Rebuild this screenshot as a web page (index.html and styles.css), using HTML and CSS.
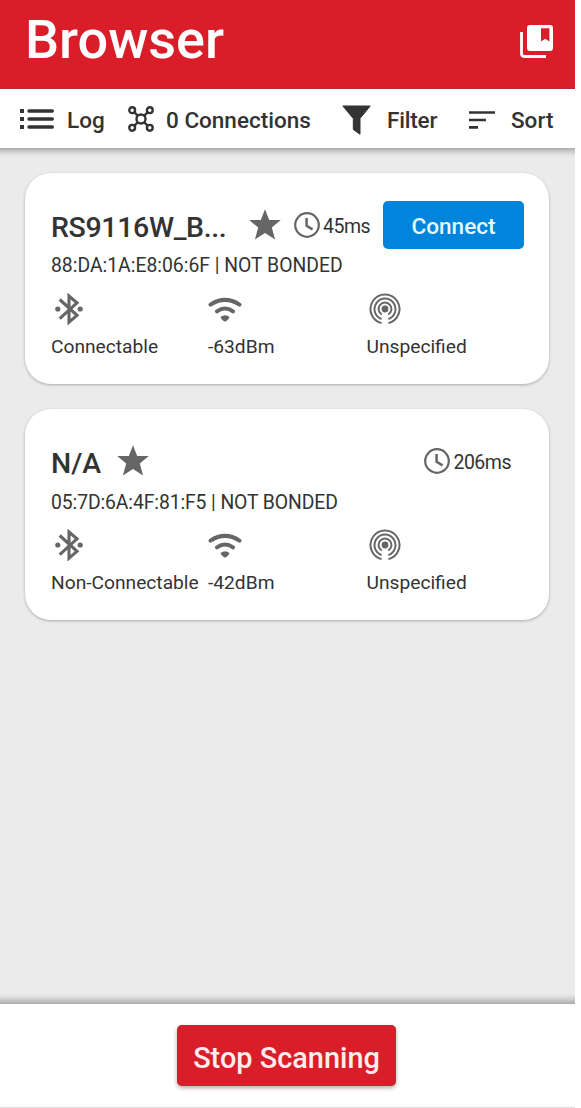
FILE: index.html
```html
<!DOCTYPE html>
<html lang="en">
<head>
<meta charset="utf-8">
<title>Browser</title>
<link rel="stylesheet" href="styles.css">
</head>
<body>
<svg class="defs" aria-hidden="true">
  <symbol id="star" viewBox="0 0 32 32"><path d="M16 .2 20.2 11H31.8L22.8 18.6 26.1 30.6 16 23.9 5.9 30.6 9.2 18.6.2 11H11.8z" fill="currentColor"/></symbol>
  <symbol id="clock" viewBox="0 0 26 26"><circle cx="13" cy="13" r="11.8" fill="none" stroke="currentColor" stroke-width="2.2"/><path d="M12.6 6v7.8l6 3.6" fill="none" stroke="currentColor" stroke-width="2.5"/></symbol>
  <symbol id="bluetooth" viewBox="0 0 28 32"><path d="M4.7 6.5 22 22.3 14 29.2V3L22 9.8 4.7 25.6" fill="none" stroke="currentColor" stroke-width="3.1"/><circle cx="2.8" cy="16" r="2.6" fill="currentColor"/><circle cx="25.2" cy="16" r="2.6" fill="currentColor"/></symbol>
  <symbol id="wifi" viewBox="0 0 34 32"><path d="M2.5 11.6Q17 2.2 31.5 11.6M9 18.4Q17 12.7 25 18.4" fill="none" stroke="currentColor" stroke-width="4" stroke-linecap="round"/><path d="M12.7 23.7q4.3-3 8.6 0 .4 2.2-4.3 5-4.7-2.8-4.3-5z" fill="currentColor"/></symbol>
  <symbol id="beacon" viewBox="0 0 32 32"><circle cx="16" cy="16" r="3.4" fill="currentColor"/><path d="M12.8 21.5A6.4 6.4 0 1 1 19.2 21.5M12.6 26A10.5 10.5 0 1 1 19.4 26M12.6 30.1A14.5 14.5 0 1 1 19.4 30.1" fill="none" stroke="currentColor" stroke-width="2"/></symbol>
</svg>
<div class="app">
  <header class="header">
    <h1 class="header-title">Browser</h1>
    <svg class="header-icon" viewBox="0 0 33 33"><path d="M1.5 7V28.5Q1.5 31.5 4.5 31.5H26" fill="none" stroke="#fff" stroke-width="2.8"/><path fill="#fff" fill-rule="evenodd" d="M10 0H30Q33 0 33 3V23Q33 26 30 26H10Q7 26 7 23V3Q7 0 10 0zM21 3.3V16.5L25.2 13.7 29.4 16.5V3.3z"/></svg>
  </header>
  <nav class="toolbar">
    <div class="tool tool-log"><svg class="icon-log" viewBox="0 0 34 20"><path d="M0 0h4v4H0zM0 8h4v4H0zM0 16h4v4H0z" fill="#333"/><path d="M9 2H32.3M9 10H32.3M9 18H32.3" stroke="#333" stroke-width="3.4" stroke-linecap="round"/></svg><span>Log</span></div>
    <div class="tool tool-connections"><svg class="icon-nodes" viewBox="0 0 26 26"><g fill="none" stroke="#333" stroke-width="2.4"><circle cx="13" cy="13" r="4.5"/><circle cx="4.2" cy="4.2" r="2.9"/><circle cx="21.8" cy="4.2" r="2.9"/><circle cx="4.2" cy="21.8" r="2.9"/><circle cx="21.8" cy="21.8" r="2.9"/><path d="M6.2 6.2 9.9 9.9M19.8 6.2 16.1 9.9M6.2 19.8 9.9 16.1M19.8 19.8 16.1 16.1"/></g></svg><span>0 Connections</span></div>
    <div class="tool tool-filter"><svg class="icon-funnel" viewBox="0 0 29 30"><path d="M.8 1H28.2L18 13.5V29.3L11.3 24.5V13.5z" fill="#333" stroke="#333" stroke-linejoin="round"/></svg><span>Filter</span></div>
    <div class="tool tool-sort"><svg class="icon-sort" viewBox="0 0 26 18"><path d="M0 1.5H26M0 9H17M0 16.3H9" stroke="#333" stroke-width="2.7"/></svg><span>Sort</span></div>
  </nav>
  <main class="devices">
    <article class="card">
      <div class="card-top">
        <h2 class="name name-long">RS9116W_B...</h2>
        <svg class="star"><use href="#star"/></svg>
        <div class="interval"><svg class="clock"><use href="#clock"/></svg><span>45ms</span></div>
        <button class="connect">Connect</button>
      </div>
      <p class="address">88:DA:1A:E8:06:6F | NOT BONDED</p>
      <div class="stats">
        <div class="stat"><svg class="bt"><use href="#bluetooth"/></svg><span>Connectable</span></div>
        <div class="stat"><svg class="wifi"><use href="#wifi"/></svg><span>-63dBm</span></div>
        <div class="stat"><svg class="beacon"><use href="#beacon"/></svg><span>Unspecified</span></div>
      </div>
    </article>
    <article class="card card-second">
      <div class="card-top">
        <h2 class="name">N/A</h2>
        <svg class="star"><use href="#star"/></svg>
        <div class="interval interval-end"><svg class="clock"><use href="#clock"/></svg><span>206ms</span></div>
      </div>
      <p class="address">05:7D:6A:4F:81:F5 | NOT BONDED</p>
      <div class="stats">
        <div class="stat"><svg class="bt"><use href="#bluetooth"/></svg><span>Non-Connectable</span></div>
        <div class="stat"><svg class="wifi"><use href="#wifi"/></svg><span>-42dBm</span></div>
        <div class="stat"><svg class="beacon"><use href="#beacon"/></svg><span>Unspecified</span></div>
      </div>
    </article>
  </main>
  <footer class="footer"><button class="stop">Stop Scanning</button></footer>
</div>
</body>
</html>
```

FILE: styles.css
```css
* { box-sizing: border-box; }
body { margin: 0; background: #fff; font-family: Roboto, sans-serif; color: #333; }
h1, h2, p { margin: 0; }
button { border: 0; padding: 0; font-family: inherit; }
svg { display: block; flex: none; }
span { white-space: nowrap; }
.defs { display: none; }

.app { display: flex; flex-direction: column; width: 575px; height: 1108px; }

.header { display: flex; justify-content: space-between; height: 89px; padding: 0 22px 0 25px; background: #d91e2a; border-bottom: 1px solid #b52a34; }
.header-title { color: #fff; font-size: 54px; font-weight: 500; line-height: 60px; margin-top: 10px; white-space: nowrap; }
.header-icon { width: 33px; height: 33px; margin-top: 25px; }

.toolbar { display: flex; align-items: center; height: 59px; padding: 2px 0 0 20px; background: #fff; font-size: 22.5px; font-weight: 500; line-height: 26px; }
.tool { display: flex; align-items: center; height: 26px; }
.tool-log { width: 108px; gap: 13px; }
.icon-log { width: 34px; height: 20px; margin-top: -1px; }
.tool-connections { width: 214px; gap: 12px; }
.icon-nodes { width: 26px; height: 26px; margin-top: -2px; }
.tool-filter { width: 127px; gap: 16px; letter-spacing: -.2px; }
.icon-funnel { width: 29px; height: 30px; margin-top: 1px; }
.tool-sort { gap: 16px; }
.icon-sort { width: 26px; height: 18px; margin-top: 1px; }

.devices { flex: 1; display: flex; flex-direction: column; gap: 25px; padding: 25px 26px 0 25px; background: linear-gradient(#aaa, #c8c8c8 3px, #e3e3e3 7px, #ebebeb 10px, #ebebeb calc(100% - 10px), #d8d8d8 calc(100% - 6px), #aaa); }
.card { height: 211px; padding: 27px 25px 0 26px; background: #fff; border-radius: 26px; box-shadow: 0 1px 3px rgba(0, 0, 0, .28); }
.card-top { display: flex; align-items: center; height: 49px; }
.name { font-size: 28.5px; font-weight: 500; line-height: 34px; margin-top: 6px; white-space: nowrap; }
.name-long { width: 183px; letter-spacing: -.35px; }
.star { width: 32px; height: 32px; margin-left: 16px; color: #666; }
.name-long + .star { margin-left: 15px; }
.interval { display: flex; align-items: center; gap: 3px; margin-left: 13px; font-size: 19.5px; letter-spacing: -.5px; line-height: 24px; }
.interval-end { margin-left: auto; margin-right: 13px; }
.interval span { margin-top: 4px; }
.clock { width: 26px; height: 26px; color: #666; }
.connect { width: 141px; height: 48px; margin-left: auto; background: #0084dc; border-radius: 5px; color: #e5f8ff; font-size: 22.6px; font-weight: 500; line-height: 48px; padding-top: 2px; }
.address { height: 24px; margin-top: 5px; font-size: 19.35px; line-height: 24px; white-space: nowrap; }
.stats { display: grid; grid-template-columns: 157px 158.5px 1fr; margin-top: 15px; font-size: 19.2px; line-height: 24px; }
.card-second .address { margin-top: 6px; letter-spacing: -.1px; }
.card-second .stats { margin-top: 14px; }
.stat { display: flex; flex-direction: column; gap: 10px; color: #333; }
.stat svg { color: #666; height: 32px; }
.stat .bt { width: 28px; margin-left: 4px; }
.stat .wifi { width: 34px; }
.stat .beacon { width: 32px; margin-left: 2.5px; }

.footer { display: flex; justify-content: center; height: 104px; padding: 21px 2px 0 0; background: #fff; border-bottom: 1px solid #ddd; }
.stop { width: 219px; height: 61px; background: #d91e2a; color: #ffecec; border-radius: 5px; font-size: 28.9px; font-weight: 500; line-height: 60px; padding-top: 3px; box-shadow: 0 2px 4px rgba(60, 0, 0, .35), inset 0 0 1px 1px rgba(170, 50, 65, .6); }
```
